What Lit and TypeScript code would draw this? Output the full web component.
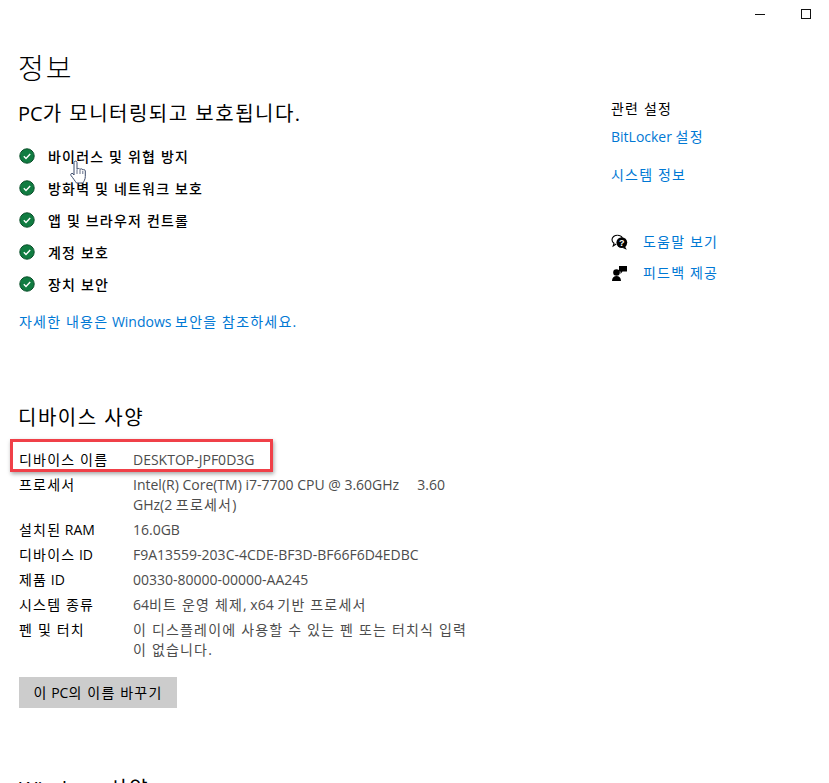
import { LitElement, html, css, svg } from "lit";
import { customElement } from "lit/decorators.js";

const statusItems = ["바이러스 및 위협 방지", "방화벽 및 네트워크 보호", "앱 및 브라우저 컨트롤", "계정 보호", "장치 보안"];
const specs: [string, string][] = [
  ["디바이스 이름", "DESKTOP-JPF0D3G"],
  ["프로세서", "Intel(R) Core(TM) i7-7700 CPU @ 3.60GHz\u00a0\u00a0\u00a0\u00a0 3.60 GHz(2 프로세서)"],
  ["설치된 RAM", "16.0GB"],
  ["디바이스 ID", "F9A13559-203C-4CDE-BF3D-BF66F6D4EDBC"],
  ["제품 ID", "00330-80000-00000-AA245"],
  ["시스템 종류", "64비트 운영 체제, x64 기반 프로세서"],
  ["펜 및 터치", "이 디스플레이에 사용할 수 있는 펜 또는 터치식 입력이 없습니다."],
];

/* Hangul runs get their own tracking: the reference's Korean face is wider than the installed one. */
const k = (text: string) =>
  text.split(/([\uAC00-\uD7A3]+(?:\s+[\uAC00-\uD7A3]+)*)/).map((part, i) =>
    i % 2 ? html`<span class="ko">${part}</span>` : part
  );

const check = svg`<svg class="check" viewBox="0 0 16 16" width="16" height="16"><circle cx="8" cy="8" r="7.2" fill="#107c41" stroke="#0b4f2a" stroke-width="1"/><path d="M4.8 8.2l2.2 2.2 4.2-4.4" fill="none" stroke="#fff" stroke-width="1.4"/></svg>`;

@customElement("app-root")
export class AppRoot extends LitElement {
  static styles = css`
    :host { display: block; width: 829px; height: 783px; overflow: hidden; background: #fff; color: #000;
      font-family: "Open Sans", "Noto Sans CJK KR", sans-serif; font-size: 14px; line-height: 20px; position: relative; }
    .ko { letter-spacing: .085em; }
    h1 .ko, h2 .ko { letter-spacing: .075em; }
    .winbar { display: flex; justify-content: flex-end; align-items: center; height: 28px; gap: 36px; padding-right: 18px; }
    .min { width: 10px; height: 1px; background: #111; }
    .max { width: 8px; height: 8px; border: 1px solid #111; }
    .page { display: flex; padding-left: 19px; }
    .main { width: 592px; flex: none; }
    h1 { margin: 0 0 0 -1px; padding-top: 18px; font-size: 28px; line-height: 44px; font-weight: 300; }
    h2 { margin: 0; font-size: 20px; line-height: 28px; font-weight: 400; }
    .protect { margin: 10px 0 0 -1px; }
    .status { list-style: none; margin: 13px 0 0; padding: 0; display: flex; flex-direction: column; }
    .status li { display: flex; align-items: center; height: 32px; font-weight: 500; }
    .check { flex: none; margin-right: 13px; margin-top: -2px; }
    .link { color: #0078d4; text-decoration: none; }
    .more { display: block; margin-top: 11px; }
    .specs-title { margin-top: 72px; margin-left: -1px; }
    .specs { display: grid; grid-template-columns: 114px 336px; row-gap: 5px; margin: 18px 0 0; position: relative; width: 450px; }
    .specs dt, .specs dd { margin: 0; }
    .specs dd { color: #4c4c4c; }
    .mark { position: absolute; left: -9px; top: -11px; width: 257px; height: 27px; border: 3px solid #f04048; box-shadow: 1px 2px 4px rgba(0,0,0,.35); pointer-events: none; }
    button { display: block; margin-top: 17px; width: 158px; height: 31px; padding: 0; border: 0; background: #cccccc; color: #000; font: inherit; }
    .next { margin-top: 67px; }
    aside { display: flex; flex-direction: column; padding-top: 71px; }
    .side-link { display: block; margin-top: 8px; }
    .side-link + .side-link { margin-top: 18px; }
    .help { display: flex; flex-direction: column; gap: 11px; margin-top: 47px; }
    .help a { display: flex; align-items: center; gap: 15px; }
    .help svg { flex: none; }
    .cursor { position: absolute; left: 69px; top: 160px; }
  `;

  render() {
    return html`
      <div class="winbar"><span class="min"></span><span class="max"></span></div>
      <div class="page">
        <div class="main">
          <h1>${k("정보")}</h1>
          <h2 class="protect">${k("PC가 모니터링되고 보호됩니다.")}</h2>
          <ul class="status">
            ${statusItems.map((s) => html`<li>${check}<span>${k(s)}</span></li>`)}
          </ul>
          <a class="link more">${k("자세한 내용은 Windows 보안을 참조하세요.")}</a>
          <h2 class="specs-title">${k("디바이스 사양")}</h2>
          <dl class="specs">
            <div class="mark"></div>
            ${specs.map(([key, v]) => html`<dt>${k(key)}</dt><dd>${k(v)}</dd>`)}
          </dl>
          <button>${k("이 PC의 이름 바꾸기")}</button>
          <h2 class="next">Windows ${k("사양")}</h2>
        </div>
        <aside>
          <div>${k("관련 설정")}</div>
          <a class="link side-link">BitLocker ${k("설정")}</a>
          <a class="link side-link">${k("시스템 정보")}</a>
          <div class="help">
            <a class="link">
              <svg width="17" height="17" viewBox="0 0 17 17"><path d="M6.5 1.2C3.4 1.2 1 3.2 1 5.8c0 1.5.8 2.7 2 3.500L2.200 12l3-2" fill="none" stroke="#000" stroke-width="1.1"/><path d="M6.500 1.200c2.200 0 4 1 4.900 2.500" fill="none" stroke="#000" stroke-width="1.1"/><circle cx="10.800" cy="8.600" r="5.400" fill="#000"/><path d="M14 12.500l1.800 3.200-4-1.800z" fill="#000"/><text x="10.800" y="11.800" font-size="9" font-weight="700" text-anchor="middle" fill="#fff" font-family="Liberation Sans">?</text></svg>
              <span>${k("도움말 보기")}</span>
            </a>
            <a class="link">
              <svg width="17" height="17" viewBox="0 0 17 17"><circle cx="5.500" cy="7.500" r="3.300" fill="#000"/><path d="M1 16c0-3.400 2-5 4.500-5s4.500 1.600 4.500 5z" fill="#000"/><path d="M8 1h8v5.500h-4.500L9.500 9V6.500H8z" fill="#000"/></svg>
              <span>${k("피드백 제공")}</span>
            </a>
          </div>
        </aside>
      </div>
      <svg class="cursor" width="20" height="26" viewBox="0 0 20 26"><path d="M5 2.500c0-1.800 3-1.800 3 0v6.700c.4-1 2.700-1 3 .3.500-1 2.600-.8 2.800.5.600-.7 2.500-.4 2.500 1v5.500c0 3-1.500 5-2.500 6.500H7.500C6 21 4 18 2 15.500c-1-1.400.8-2.800 2-1.800l1 1.300z" fill="#fff" stroke="#3c4a6a" stroke-width="1"/><path d="M8 9.500v4.500M11 10v4M13.800 11v3" stroke="#3c4a6a" stroke-width=".8" fill="none"/></svg>
    `;
  }
}
